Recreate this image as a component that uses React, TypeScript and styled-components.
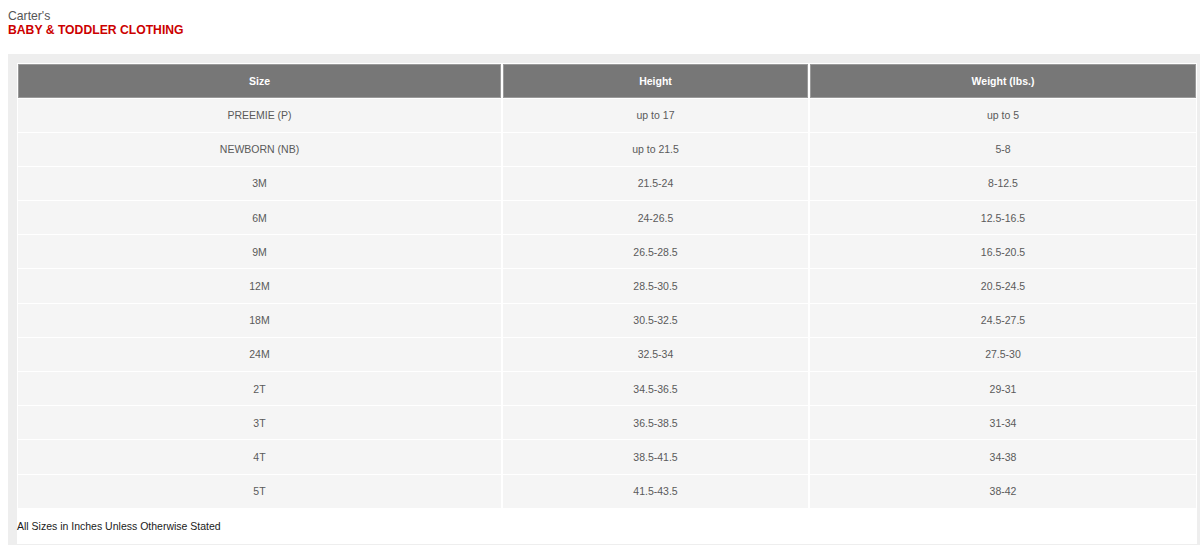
import React from "react";
import styled, { createGlobalStyle } from "styled-components";

const GlobalStyle = createGlobalStyle`
  html, body {
    margin: 0;
    padding: 0;
    background: #ffffff;
    font-family: "Liberation Sans", Arial, Helvetica, sans-serif;
  }
  body {
    overflow: hidden;
  }
`;

const Page = styled.div`
  width: 1200px;
  height: 545px;
  padding: 9px 0 0 8px;
  box-sizing: border-box;
  display: flex;
  flex-direction: column;
`;

const Header = styled.div`
  display: flex;
  flex-direction: column;
  height: 45px;
`;

const Brand = styled.div`
  font-size: 12.2px;
  line-height: 14px;
  color: #555555;
`;

const Category = styled.div`
  font-size: 12.2px;
  line-height: 15px;
  font-weight: 700;
  color: #cc0000;
`;

const Panel = styled.div`
  flex: 1;
  background: #eeeeee;
  padding: 9px 3px 1px 9px;
  display: flex;
  flex-direction: column;
`;

const Sheet = styled.div`
  flex: 1;
  background: #ffffff;
  display: flex;
  flex-direction: column;
`;

const Table = styled.table`
  border-collapse: separate;
  border-spacing: 2px 1px;
  margin: 0 -1px;
  width: calc(100% + 2px);
  table-layout: fixed;
  font-size: 10.5px;
`;

const HeadCell = styled.th<{ $w: number }>`
  width: ${(p) => p.$w}px;
  height: 33.5px;
  padding: 0;
  box-sizing: border-box;
  background: #777777;
  border: 1px solid #9a9a9a;
  color: #ffffff;
  font-weight: 700;
  text-align: center;
  vertical-align: middle;
`;

const Cell = styled.td`
  height: 33.2px;
  padding: 0;
  box-sizing: border-box;
  background: #f5f5f5;
  color: #5a5a5a;
  text-align: center;
  vertical-align: middle;
`;

const Note = styled.div`
  flex: 1;
  display: flex;
  align-items: center;
  font-size: 10.5px;
  color: #1a1a1a;
  padding-bottom: 1px;
`;

const rows: [string, string, string][] = [
  ["PREEMIE (P)", "up to 17", "up to 5"],
  ["NEWBORN (NB)", "up to 21.5", "5-8"],
  ["3M", "21.5-24", "8-12.5"],
  ["6M", "24-26.5", "12.5-16.5"],
  ["9M", "26.5-28.5", "16.5-20.5"],
  ["12M", "28.5-30.5", "20.5-24.5"],
  ["18M", "30.5-32.5", "24.5-27.5"],
  ["24M", "32.5-34", "27.5-30"],
  ["2T", "34.5-36.5", "29-31"],
  ["3T", "36.5-38.5", "31-34"],
  ["4T", "38.5-41.5", "34-38"],
  ["5T", "41.5-43.5", "38-42"],
];

export default function App() {
  return (
    <>
      <GlobalStyle />
      <Page>
        <Header>
          <Brand>Carter's</Brand>
          <Category>BABY &amp; TODDLER CLOTHING</Category>
        </Header>
        <Panel>
          <Sheet>
            <Table>
              <thead>
                <tr>
                  <HeadCell $w={483}>Size</HeadCell>
                  <HeadCell $w={305}>Height</HeadCell>
                  <HeadCell $w={386}>Weight (lbs.)</HeadCell>
                </tr>
              </thead>
              <tbody>
                {rows.map((r) => (
                  <tr key={r[0]}>
                    <Cell>{r[0]}</Cell>
                    <Cell>{r[1]}</Cell>
                    <Cell>{r[2]}</Cell>
                  </tr>
                ))}
              </tbody>
            </Table>
            <Note>All Sizes in Inches Unless Otherwise Stated</Note>
          </Sheet>
        </Panel>
      </Page>
    </>
  );
}
